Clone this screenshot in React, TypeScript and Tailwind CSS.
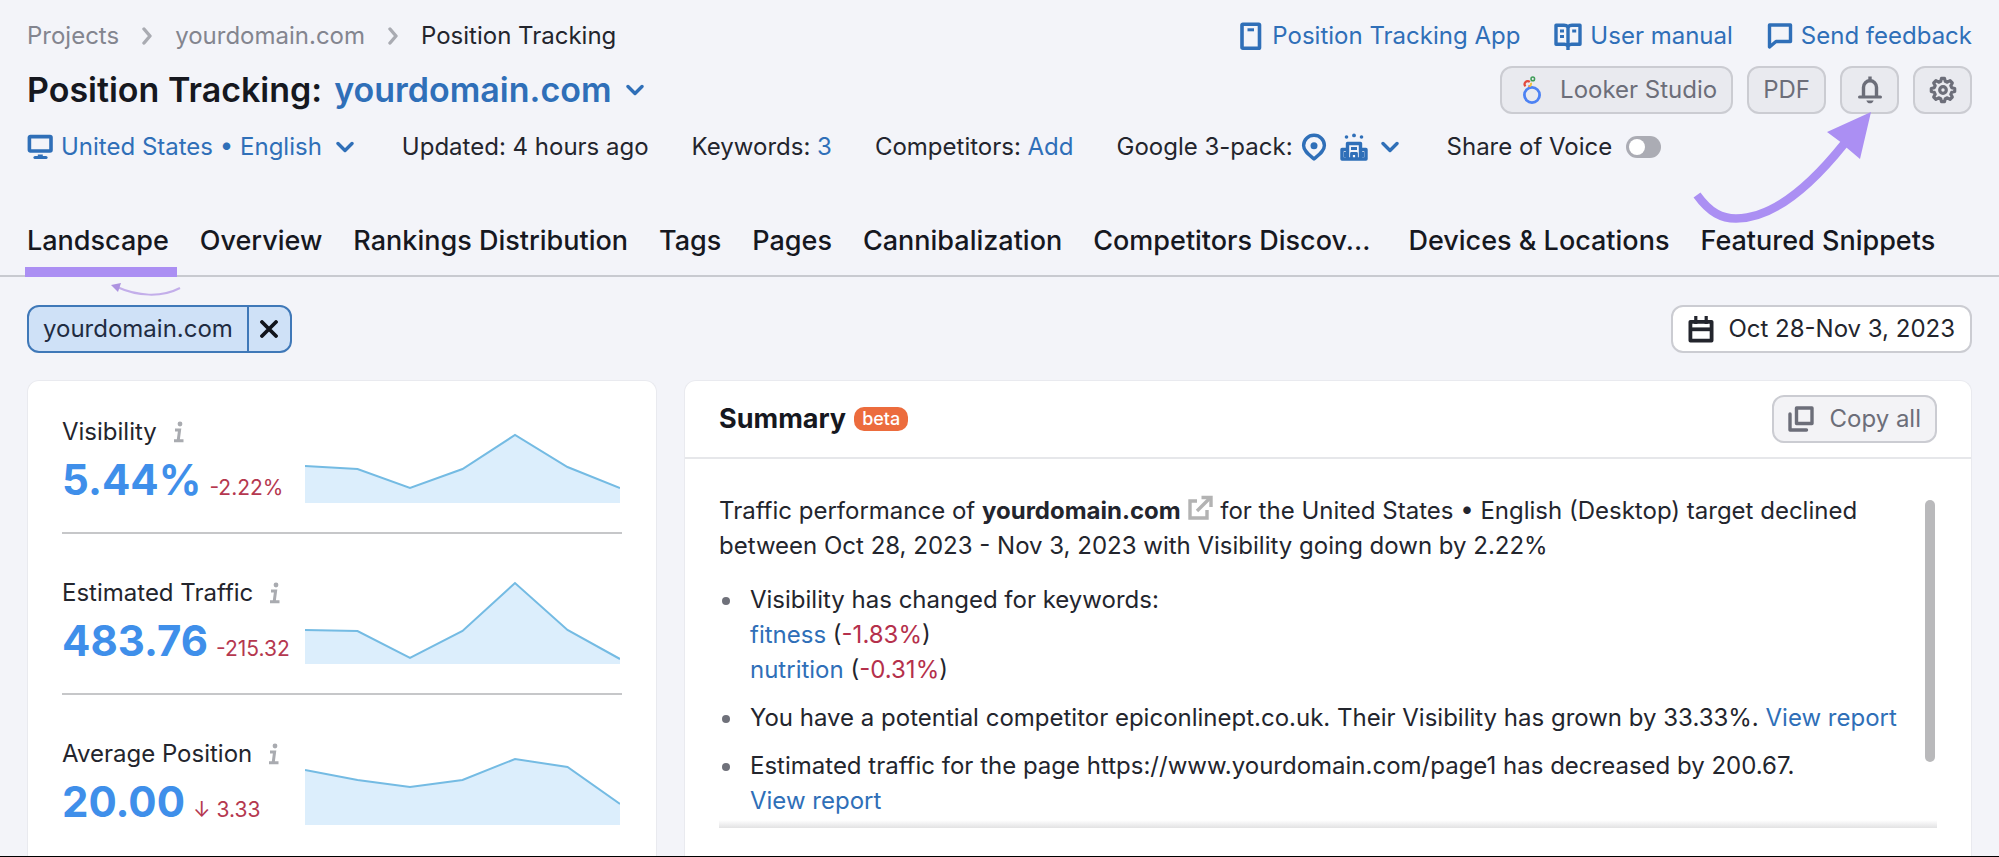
import type { ReactNode } from "react";

const LINK = "text-[#2f6fb8]";

function ChevronDown({ className = "" }: { className?: string }) {
  return (
    <svg viewBox="0 0 18 12" className={`h-3 w-[18px] ${className}`} fill="none" stroke="currentColor" strokeWidth="3.400" strokeLinecap="round" strokeLinejoin="round" aria-hidden="true">
      <path d="M2 2.500 9 9.500l7-7" />
    </svg>
  );
}

function ChevronRight() {
  return (
    <svg viewBox="0 0 12 18" className="h-[18px] w-3" fill="none" stroke="#a9abb2" strokeWidth="3.400" strokeLinecap="round" strokeLinejoin="round" aria-hidden="true">
      <path d="m3 2 6 7-6 7" />
    </svg>
  );
}

function PhoneIcon() {
  return (
    <svg viewBox="0 0 24 28" className="h-7 w-6" fill="none" stroke="currentColor" strokeWidth="3.600" aria-hidden="true">
      <rect x="2" y="2.200" width="17.500" height="24" rx="0.800" />
      <path d="M7.500 7.800h6.500" strokeWidth="3" />
    </svg>
  );
}

function BookIcon() {
  return (
    <svg viewBox="0 0 28 28" className="size-7" fill="none" stroke="currentColor" strokeWidth="3.400" aria-hidden="true">
      <path d="M14 4.800C13 3.700 11.500 3.200 10 3.200H2v19h8.500c1.500 0 2.800.6 3.500 1.800.7-1.200 2-1.800 3.500-1.800H26v-19h-8c-1.500 0-3 .5-4 1.600Z" strokeLinejoin="round" />
      <path d="M14 5v23" />
      <path d="M6 9h4M6 14.500h4M18.200 9h4" strokeWidth="3" />
    </svg>
  );
}

function ChatIcon() {
  return (
    <svg viewBox="0 0 26 28" className="h-7 w-[26px]" fill="none" stroke="currentColor" strokeWidth="3.400" strokeLinejoin="round" aria-hidden="true">
      <path d="M2.500 3h21v16.500H9L2.500 25Z" />
    </svg>
  );
}

function LookerIcon() {
  return (
    <svg viewBox="0 0 20 28" className="h-7 w-5" fill="none" aria-hidden="true">
      <circle cx="10" cy="19" r="7.600" stroke="#4d82f3" strokeWidth="2.800" />
      <path d="M8 10.500 6.500 9.500" stroke="#e8584b" strokeWidth="2" />
      <path d="M3.600 10.300A3 3 0 0 1 7.800 6" stroke="#e2493c" strokeWidth="2.200" />
      <path d="M7.200 10.500c1.400-.6 2.200-2 1.800-3.800" stroke="#f3c13a" strokeWidth="1.800" />
      <circle cx="10.800" cy="2.900" r="1.800" stroke="#3f9d58" strokeWidth="1.500" />
    </svg>
  );
}

function BellIcon() {
  return (
    <svg viewBox="0 0 24 28" className="h-7 w-6" fill="none" stroke="currentColor" strokeWidth="3.400" aria-hidden="true">
      <path d="M12 0.500v4" />
      <path d="M5.500 20.500V11.300a6.500 6.500 0 0 1 13 0v9.200" />
      <path d="M1.500 21h21" strokeLinecap="round" strokeWidth="3" />
      <path d="M8.300 24.500h7.400c-.8 2-2.100 2.800-3.700 2.800s-2.900-.8-3.700-2.800Z" fill="currentColor" stroke="none" />
    </svg>
  );
}

function GearIcon() {
  return (
    <svg viewBox="0 0 28 28" className="size-7" fill="none" stroke="currentColor" strokeWidth="3.200" strokeLinejoin="round" aria-hidden="true">
      <path d="M11.700 5.300 12.500 2.300h3l.8 3 2 .9 2.800-1.500 2.200 2.200-1.500 2.800.9 2 3 .8v3l-3 .8-.9 2 1.500 2.800-2.200 2.200-2.800-1.500-2 .9-.8 3h-3l-.8-3-2-.9-2.800 1.500-2.200-2.200 1.500-2.800-.9-2-3-.8v-3l3-.8.9-2-1.500-2.800 2.200-2.200 2.800 1.500Z" />
      <circle cx="14" cy="14" r="3.300" />
    </svg>
  );
}

function MonitorIcon() {
  return (
    <svg viewBox="0 0 26 26" className="size-[26px]" fill="none" stroke="currentColor" strokeWidth="3.600" strokeLinejoin="round" aria-hidden="true">
      <rect x="2.400" y="2.600" width="21.600" height="14.400" rx="1" />
      <path d="M8 23.500h11" strokeLinecap="round" strokeWidth="3.200" />
      <path d="M13.300 20.500v3" strokeWidth="5" />
    </svg>
  );
}

function PinIcon() {
  return (
    <svg viewBox="0 0 26 28" className="h-7 w-[26px]" fill="none" stroke="currentColor" strokeWidth="3.400" strokeLinejoin="round" aria-hidden="true">
      <path d="M13 2.200A10.300 10.300 0 0 0 2.600 12.500c0 5.500 5 9 10.400 13.500 5.400-4.500 10.400-8 10.400-13.500A10.300 10.300 0 0 0 13 2.200Z" />
      <circle cx="13" cy="12.800" r="3.500" fill="currentColor" stroke="none" />
    </svg>
  );
}

function HotelIcon() {
  return (
    <svg viewBox="0 0 28 28" className="size-7" fill="none" stroke="currentColor" strokeWidth="3.400" strokeLinejoin="round" aria-hidden="true">
      <path d="M7.500 26V10.500h13V26" />
      <path d="M7.500 16.500H2V26h24v-9.500h-5.500" />
      <path d="M11 15.500h6M11.500 26v-5.500h5V26" strokeWidth="2.800" />
      <path d="M5 19v5M23 19v5" strokeWidth="2" />
      <g fill="currentColor" stroke="none">
        <circle cx="6.500" cy="4" r="1.800" />
        <circle cx="14" cy="2.400" r="1.900" />
        <circle cx="21.500" cy="4" r="1.800" />
      </g>
    </svg>
  );
}

function CalendarIcon() {
  return (
    <svg viewBox="0 0 26 28" className="h-7 w-[26px]" fill="none" stroke="currentColor" strokeWidth="3.800" strokeLinejoin="round" aria-hidden="true">
      <rect x="2.400" y="6.800" width="21.200" height="18.800" />
      <path d="M2 14.300h22" />
      <path d="M7.800 1v8M18.200 1v8" strokeWidth="3.200" />
    </svg>
  );
}

function CopyIcon() {
  return (
    <svg viewBox="0 0 26 26" className="size-[26px]" fill="none" stroke="currentColor" strokeWidth="3.400" strokeLinejoin="round" strokeLinecap="round" aria-hidden="true">
      <rect x="8.500" y="2" width="15.500" height="15.500" />
      <path d="M2 8v16h16.500" />
    </svg>
  );
}

function ExternalIcon() {
  return (
    <svg viewBox="0 0 26 26" className="inline-block size-[26px] align-[-2px]" fill="none" stroke="#b3b3b3" strokeWidth="3.400" aria-hidden="true">
      <path d="M10 6H3v17h17v-8" />
      <path d="M10 16 23 3" />
      <path d="M14.500 2.500H24V12" />
    </svg>
  );
}

function InfoIcon() {
  return (
    <svg viewBox="0 0 12 22" className="h-[22px] w-3" fill="none" stroke="#a9abb0" strokeWidth="3" aria-hidden="true">
      <circle cx="7" cy="3" r="2.400" fill="#a9abb0" stroke="none" />
      <path d="M2 9h4.600L5.200 19.500M1 19.800h9.500" />
    </svg>
  );
}

function TopLink({ icon, children }: { icon: ReactNode; children: ReactNode }) {
  return (
    <a href="#" className={`flex items-center gap-2 ${LINK}`}>
      {icon}
      {children}
    </a>
  );
}

const TOOL_BUTTON =
  "flex h-12 items-center rounded-xl border-2 border-[#cbccd2] bg-[#e9eaef] text-[#6c6e79]";

const TABS = [
  "Overview",
  "Rankings Distribution",
  "Tags",
  "Pages",
  "Cannibalization",
  "Competitors Discov...",
  "Devices & Locations",
  "Featured Snippets",
];

const METRICS = [
  { label: "Visibility", value: "5.44%", delta: "-2.22%", points: [51, 54, 73, 54, 20, 52, 73] },
  { label: "Estimated Traffic", value: "483.76", delta: "-215.32", points: [54, 55, 82, 55, 7, 54, 83] },
  { label: "Average Position", value: "20.00", delta: "↓ 3.33", points: [33, 43, 50, 43, 22, 30, 67] },
];

function Sparkline({ points }: { points: number[] }) {
  const line = points.map((y, i) => `${(i * 315) / 6},${y}`).join(" ");
  return (
    <svg viewBox="0 0 315 88" className="mr-[2px] h-[88px] w-[315px] shrink-0" aria-hidden="true">
      <polygon points={`0,88 ${line} 315,88`} fill="#dceefc" />
      <polyline points={line} fill="none" stroke="#74bbe3" strokeWidth="2" />
    </svg>
  );
}

export default function App() {
  return (
    <div className="flex min-h-screen flex-col border-b border-black bg-[#f3f4f9] font-['Inter','Liberation_Sans',sans-serif] text-2xl text-[#23252d]">
      <header className="px-[27px] pt-4">
        <div className="flex h-10 items-center justify-between">
          <nav aria-label="Breadcrumb" className="flex items-center gap-[22px] text-[#83858f]">
            <a href="#">Projects</a>
            <ChevronRight />
            <a href="#">yourdomain.com</a>
            <ChevronRight />
            <span className="text-[#23252d]">Position Tracking</span>
          </nav>
          <div className="flex items-center gap-[34px]">
            <TopLink icon={<PhoneIcon />}>Position Tracking App</TopLink>
            <TopLink icon={<BookIcon />}>User manual</TopLink>
            <TopLink icon={<ChatIcon />}>Send feedback</TopLink>
          </div>
        </div>

        <div className="mt-[10px] flex h-12 items-center justify-between">
          <h1 className="flex items-center gap-3 text-[34px] font-semibold text-[#16181f]">
            Position Tracking:
            <button type="button" className={`flex items-center gap-[14px] ${LINK}`}>
              yourdomain.com
              <ChevronDown />
            </button>
          </h1>
          <div className="flex items-center gap-[14px]">
            <button type="button" className={`${TOOL_BUTTON} gap-[18px] pr-[14px] pl-5`}>
              <LookerIcon />
              Looker Studio
            </button>
            <button type="button" className={`${TOOL_BUTTON} px-[14px]`}>PDF</button>
            <div className="relative">
              <button type="button" aria-label="Notifications" className={`${TOOL_BUTTON} w-[59px] justify-center`}>
                <BellIcon />
              </button>
              <svg viewBox="0 0 182 116" className="pointer-events-none absolute top-[45px] right-[27px] z-10 h-[116px] w-[182px]" fill="none" aria-hidden="true">
                <path d="M7 84C20 102 32 107.500 46 107.500 84 107.500 122 73 154 33" stroke="#ab8ff3" strokeWidth="8.500" />
                <path d="m181 1-44 20 13.500 10 6.500 6L170 48Z" fill="#ab8ff3" />
              </svg>
            </div>
            <button type="button" aria-label="Settings" className={`${TOOL_BUTTON} w-[59px] justify-center`}>
              <GearIcon />
            </button>
          </div>
        </div>

        <div className="mt-[13px] flex h-10 items-center gap-[43px]">
          <button type="button" className={`mr-[5px] flex items-center gap-[14px] ${LINK}`}>
            <span className="flex items-center gap-2">
              <MonitorIcon />
              United States • English
            </span>
            <ChevronDown />
          </button>
          <span>Updated: 4 hours ago</span>
          <span>Keywords: <a href="#" className={LINK}>3</a></span>
          <span>Competitors: <a href="#" className={LINK}>Add</a></span>
          <div className="mr-[5px] flex items-center gap-2">
            Google 3-pack:
            <button type="button" aria-label="Google 3-pack options" className={`flex items-center gap-[13px] ${LINK}`}>
              <PinIcon />
              <HotelIcon />
              <ChevronDown />
            </button>
          </div>
          <label className="flex items-center gap-[14px]">
            Share of Voice
            <input
              type="checkbox"
              role="switch"
              className="flex h-[22px] w-[35px] appearance-none items-center rounded-full bg-[#abacb4] px-[3px] before:size-4 before:rounded-full before:bg-white checked:justify-end checked:bg-[#2f6fb8]"
            />
          </label>
        </div>
      </header>

      <nav aria-label="Reports" className="mt-12 flex gap-[31px] border-b-2 border-[#c8cad0] px-[27px] text-[27px] leading-[52px] font-medium whitespace-nowrap text-[#16181f]">
        <div className="relative">
          <a href="#" aria-current="page" className="block pb-2">Landscape</a>
          <span className="absolute -right-2 -bottom-[2px] -left-[2px] h-[10px] bg-[#ab8ff3]" />
          <svg viewBox="0 0 70 14" className="pointer-events-none absolute top-[68px] -right-3 h-[14px] w-[70px]" fill="none" aria-hidden="true">
            <path d="M6 4C26 13 50 15 69 5" stroke="#c3aeea" strokeWidth="2" />
            <path d="M0 2 10 0 7 9Z" fill="#ad92e0" />
          </svg>
        </div>
        {TABS.map((tab) => (
          <a key={tab} href="#" className={tab.endsWith("...") ? "pr-[7px]" : undefined}>{tab}</a>
        ))}
      </nav>

      <main className="flex flex-1 flex-col px-[27px] pt-7">
        <div className="flex items-center justify-between">
          <div className="flex h-12 items-stretch rounded-xl border-2 border-[#3f78b8] bg-[#cfe1f7] text-[#1f2c42]">
            <span className="flex items-center px-[14px]">yourdomain.com</span>
            <button type="button" aria-label="Remove yourdomain.com" className="flex w-[43px] items-center justify-center border-l-2 border-[#3f78b8] text-[#12141b]">
              <svg viewBox="0 0 18 18" className="size-[18px]" fill="none" stroke="currentColor" strokeWidth="3.800" strokeLinecap="round" aria-hidden="true">
                <path d="m2 2 14 14M16 2 2 16" />
              </svg>
            </button>
          </div>
          <button type="button" className="flex h-12 items-center gap-[14px] rounded-xl border-2 border-[#cbccd2] bg-white px-[15px]">
            <CalendarIcon />
            Oct 28-Nov 3, 2023
          </button>
        </div>

        <div className="mt-[27px] flex flex-1 gap-[27px]">
          <section aria-label="Metrics" className="w-[630px] shrink-0 rounded-t-xl border border-b-0 border-[#e9eaef] bg-white px-[34px]">
            {METRICS.map((metric) => (
              <div key={metric.label} className="flex items-start justify-between border-b-2 border-[#c6c7c9] pt-[42px] pb-[21px] first:pt-[34px] last:border-b-0 last:pb-4">
                <div className="whitespace-nowrap">
                  <div className="flex items-center gap-4 leading-[34px]">
                    {metric.label}
                    <InfoIcon />
                  </div>
                  <div className="flex h-[62px] items-baseline gap-2 text-[42px] leading-[62px] font-bold text-[#3f8fea]">
                    {metric.value}
                    <span className="text-[21px] leading-none font-normal text-[#b5384f]">{metric.delta}</span>
                  </div>
                </div>
                <Sparkline points={metric.points} />
              </div>
            ))}
          </section>

          <section aria-label="Summary" className="min-w-0 flex-1 rounded-t-xl border border-b-0 border-[#e9eaef] bg-white">
            <div className="flex h-[78px] items-center justify-between border-b-2 border-[#e6e7ea] px-[34px]">
              <h2 className="flex items-center gap-2 text-[27px] font-bold text-[#16181f]">
                Summary
                <span className="flex h-6 items-center rounded-[10px] bg-[#ec6c3d] px-2 text-[18px] font-medium text-white">beta</span>
              </h2>
              <button type="button" className="flex h-12 items-center gap-4 rounded-xl border-2 border-[#cbccd2] bg-[#f3f3f6] px-[14px] text-[#6c6e79]">
                <CopyIcon />
                Copy all
              </button>
            </div>
            <div className="relative mx-[34px] flex justify-between pt-[34px] leading-[35px]">
              <div>
                <p className="max-w-[1180px]">
                  Traffic performance of <strong className="font-bold">yourdomain.com</strong> <ExternalIcon /> for the United States • English (Desktop) target declined between Oct 28, 2023 - Nov 3, 2023 with Visibility going down by 2.22%
                </p>
                <ul className="mt-[19px] flex flex-col gap-[13px] pb-[10px]">
                  {[
                    <>
                      Visibility has changed for keywords:
                      <br />
                      <a href="#" className={LINK}>fitness</a> (<span className="text-[#b5304b]">-1.83%</span>)
                      <br />
                      <a href="#" className={LINK}>nutrition</a> (<span className="text-[#b5304b]">-0.31%</span>)
                    </>,
                    <>
                      You have a potential competitor epiconlinept.co.uk. Their Visibility has grown by 33.33%. <a href="#" className={LINK}>View report</a>
                    </>,
                    <>
                      Estimated traffic for the page https://www.yourdomain.com/page1 has decreased by 200.67.
                      <br />
                      <a href="#" className={LINK}>View report</a>
                    </>,
                  ].map((item, i) => (
                    <li key={i} className="flex gap-5">
                      <span className="mt-[15px] ml-[3px] size-2 shrink-0 rounded-full bg-[#6f717a]" />
                      <span>{item}</span>
                    </li>
                  ))}
                </ul>
              </div>
              <div className="mt-[7px] mr-[2px] h-[262px] w-[10px] shrink-0 rounded-full bg-[#b9b9bb]" />
              <div className="pointer-events-none absolute inset-x-0 bottom-0 h-2 bg-linear-to-b from-transparent to-[#e2e2e3]" />
            </div>
          </section>
        </div>
      </main>
    </div>
  );
}
